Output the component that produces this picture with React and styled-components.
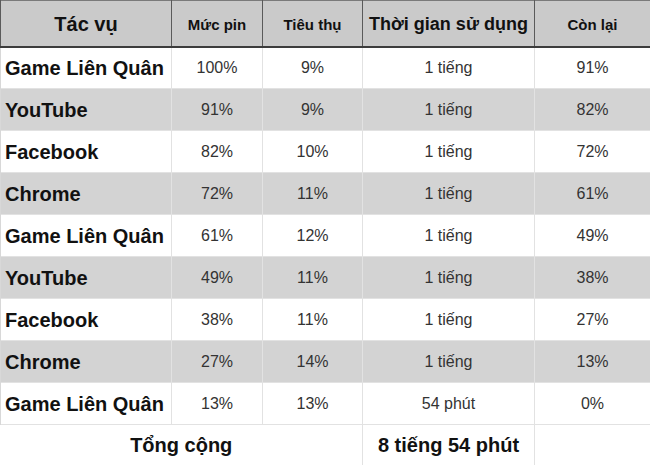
import React from "react";
import styled, { createGlobalStyle } from "styled-components";

const GlobalStyle = createGlobalStyle`
  html, body {
    margin: 0;
    padding: 0;
    background: #fff;
    font-family: "Liberation Sans", Arial, sans-serif;
  }
`;

const Table = styled.table`
  width: 650px;
  border-collapse: collapse;
  table-layout: fixed;
  font-family: "Liberation Sans", Arial, sans-serif;
`;

const HeadRow = styled.tr`
  height: 46px;
  background: #cacaca;
  border-top: 1px solid #7a7a7a;
  border-bottom: 2px solid #3c3c3c;
`;

const Th = styled.th`
  padding: 2px 2px 0;
  border-left: 1px solid #5a5a5a;
  border-right: 1px solid #5a5a5a;
  font-size: ${(p) => p.$size || "15px"};
  font-weight: bold;
  color: #111;
  text-align: center;
  white-space: nowrap;
`;

const Row = styled.tr`
  height: 42px;
  background: ${(p) => (p.$shaded ? "#d3d3d3" : "#fff")};
  border-bottom: 1px solid #e2e2e2;
`;

const NameCell = styled.td`
  padding: 1px 4px 0;
  border-left: 1px solid #d8d8d8;
  border-right: 1px solid #e2e2e2;
  font-size: 20px;
  font-weight: bold;
  color: #111;
  white-space: nowrap;
`;

const Cell = styled.td`
  padding: 1px 4px 0;
  border-right: 1px solid #e2e2e2;
  font-size: 16px;
  color: #333;
  text-align: center;
`;

const TotalCell = styled.td`
  padding: 0 4px;
  border-right: 1px solid #e2e2e2;
  font-size: 20px;
  font-weight: bold;
  color: #111;
  text-align: center;
`;

const rows = [
  ["Game Liên Quân", "100%", "9%", "1 tiếng", "91%"],
  ["YouTube", "91%", "9%", "1 tiếng", "82%"],
  ["Facebook", "82%", "10%", "1 tiếng", "72%"],
  ["Chrome", "72%", "11%", "1 tiếng", "61%"],
  ["Game Liên Quân", "61%", "12%", "1 tiếng", "49%"],
  ["YouTube", "49%", "11%", "1 tiếng", "38%"],
  ["Facebook", "38%", "11%", "1 tiếng", "27%"],
  ["Chrome", "27%", "14%", "1 tiếng", "13%"],
  ["Game Liên Quân", "13%", "13%", "54 phút", "0%"],
];

export default function App() {
  return (
    <>
      <GlobalStyle />
      <Table>
        <colgroup>
          <col style={{ width: 171 }} />
          <col style={{ width: 91 }} />
          <col style={{ width: 100 }} />
          <col style={{ width: 172 }} />
          <col style={{ width: 116 }} />
        </colgroup>
        <thead>
          <HeadRow>
            <Th $size="20px">Tác vụ</Th>
            <Th>Mức pin</Th>
            <Th>Tiêu thụ</Th>
            <Th $size="18px">Thời gian sử dụng</Th>
            <Th>Còn lại</Th>
          </HeadRow>
        </thead>
        <tbody>
          {rows.map((r, i) => (
            <Row key={i} $shaded={i % 2 === 1}>
              <NameCell>{r[0]}</NameCell>
              <Cell>{r[1]}</Cell>
              <Cell>{r[2]}</Cell>
              <Cell>{r[3]}</Cell>
              <Cell>{r[4]}</Cell>
            </Row>
          ))}
          <Row>
            <TotalCell colSpan={3}>Tổng cộng</TotalCell>
            <TotalCell>8 tiếng 54 phút</TotalCell>
            <TotalCell />
          </Row>
        </tbody>
      </Table>
    </>
  );
}
